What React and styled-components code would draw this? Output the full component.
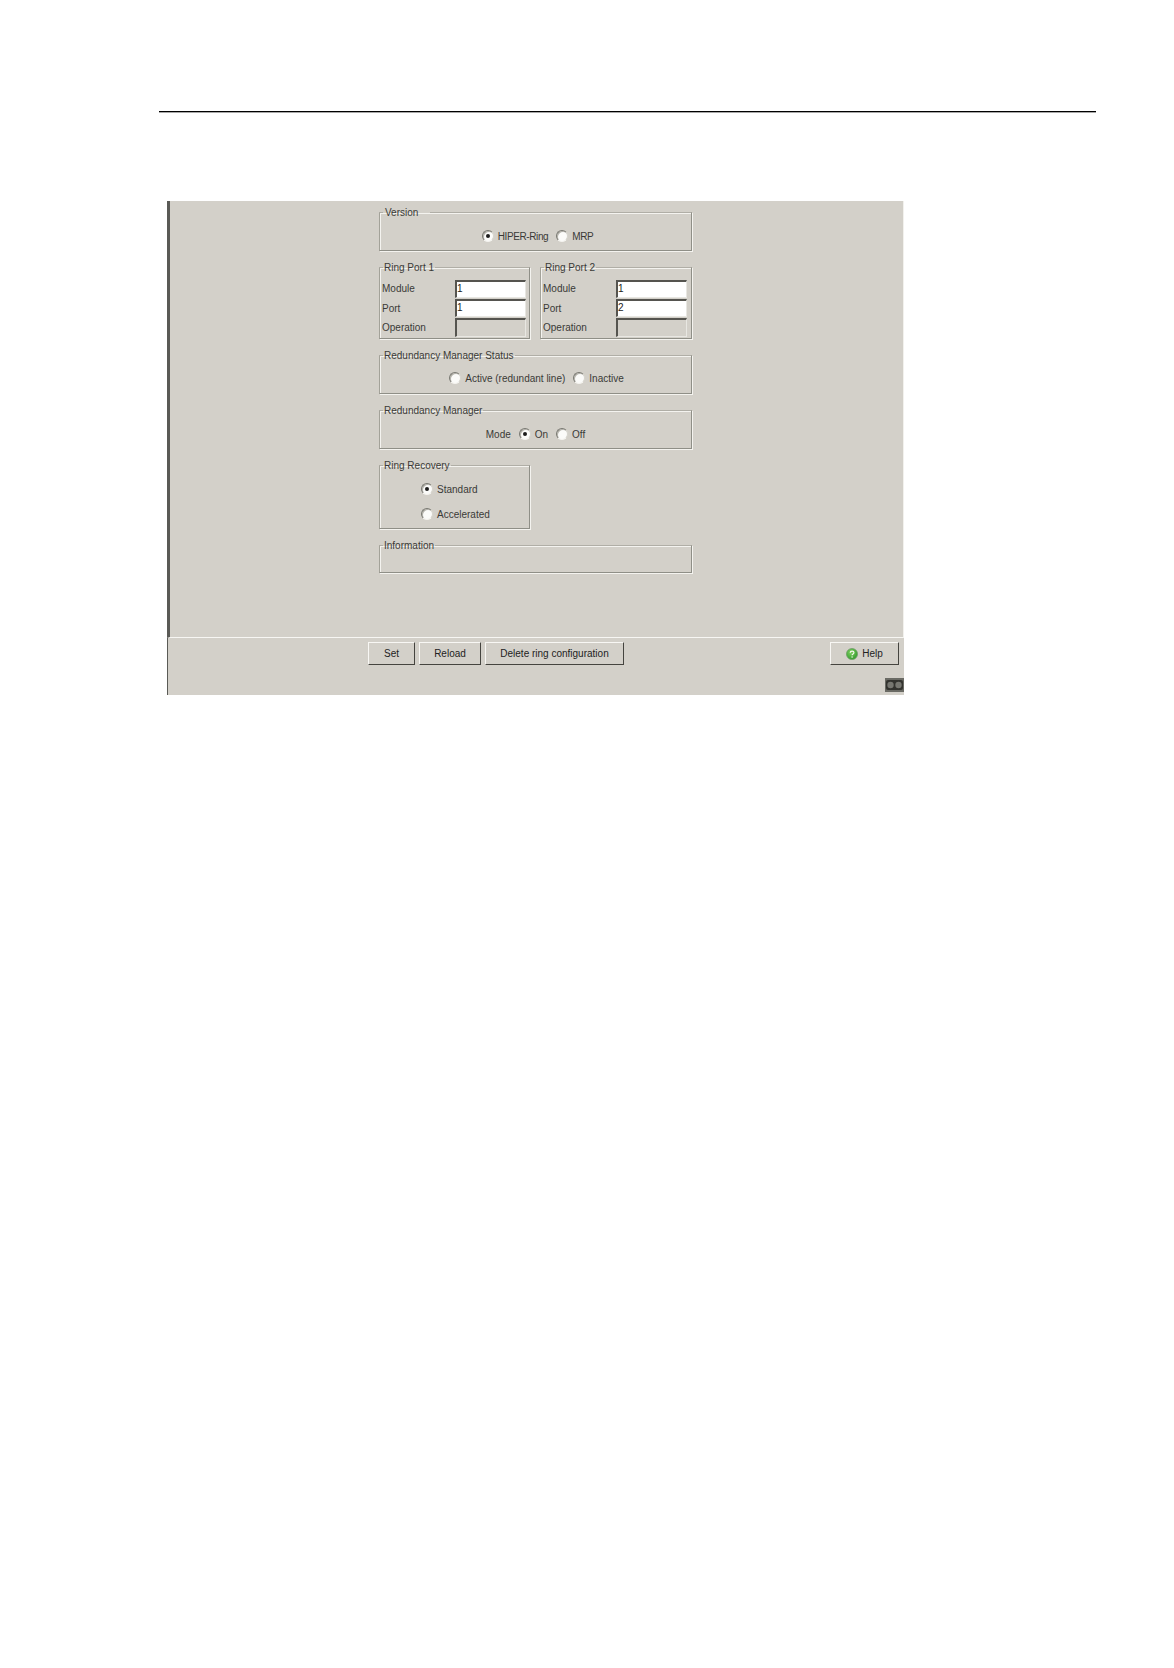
import React from "react";
import styled, { createGlobalStyle } from "styled-components";

const GlobalStyle = createGlobalStyle`
  html, body {
    margin: 0;
    background: #fff;
  }
  body {
    font-family: "Liberation Sans", Arial, sans-serif;
    font-size: 10px;
    color: #3a3a37;
  }
`;

const Page = styled.div`
  width: 1174px;
  height: 1668px;
  padding: 111px 0 0 159px;
  box-sizing: border-box;
`;

const HeaderRule = styled.div`
  width: 937px;
  height: 1px;
  background: #000;
  box-shadow: 0 1px 0 #a8a8a8;
  margin-bottom: 89px;
`;

const Panel = styled.div`
  position: relative;
  width: 737px;
  margin-left: 8px;
  height: 494px;
  background: #d3d0c9;
  display: flex;
  flex-direction: column;
`;

const Main = styled.div`
  height: 437px;
  box-sizing: border-box;
  border-left: 3px solid #5a5a56;
  border-right: 1px solid #f2f1ed;
  border-bottom: 1px solid #f7f6f3;
  padding: 4px 0 0 209px;
`;

const Form = styled.div`
  width: 313px;
  display: flex;
  flex-direction: column;
  gap: 9px;
`;

const Group = styled.fieldset`
  margin: 0;
  padding: 0;
  box-sizing: border-box;
  min-width: 0;
  width: ${(p) => p.$width || 313}px;
  height: ${(p) => p.$height}px;
  border: 1px solid #a3a299;
  border-top-color: #b0aea6;
  border-right-color: #8f8f87;
  border-bottom-color: #8f8f87;
  box-shadow: 1px 1px 0 #f4f3ef, inset 1px 1px 0 #f4f3ef;
`;

const Caption = styled.legend`
  margin-left: 3px;
  padding: 2px ${(p) => p.$right || 1}px 0 ${(p) => p.$left || 1}px;
  line-height: 12px;
  font-size: 10px;
`;

const ChoiceRow = styled.div`
  display: flex;
  align-items: center;
  justify-content: center;
  height: ${(p) => p.$height || 34}px;
  padding-left: ${(p) => p.$indent || 0}px;
  gap: 8px;
`;

const ChoiceColumn = styled.div`
  display: flex;
  flex-direction: column;
  gap: 13px;
  padding: 11px 0 0 41px;
`;

const Choice = styled.label`
  display: flex;
  align-items: center;
  gap: 4px;
  white-space: nowrap;
  letter-spacing: ${(p) => (p.$tight ? "-0.4px" : "normal")};
`;

const ModeLabel = styled.span`
  margin-right: 0;
`;

const RadioDot = styled.span`
  width: 12px;
  height: 12px;
  box-sizing: border-box;
  border-radius: 50%;
  background: #fbfbf9;
  border: 1px solid;
  border-color: #77766f #d6d4cd #f4f3ef #77766f;
  box-shadow: inset 1px 1px 0 #b4b2aa;
  display: flex;
  align-items: center;
  justify-content: center;
  &::after {
    content: "";
    width: 4px;
    height: 4px;
    border-radius: 50%;
    background: ${(p) => (p.$on ? "#1c1c1c" : "transparent")};
  }
`;

const PortRow = styled.div`
  display: flex;
  gap: 10px;
`;

const PortGrid = styled.div`
  display: grid;
  grid-template-columns: 73px 71px;
  grid-auto-rows: 19.5px;
  padding: 5px 0 0 2px;
  align-items: center;
`;

const Field = styled.div`
  height: ${(p) => (p.$disabled ? 19 : 18)}px;
  box-sizing: border-box;
  border: 1px solid;
  border-color: #55544f #e8e7e2 #e8e7e2 #55544f;
  border-left-width: 2px;
  border-top-width: 2px;
  background: ${(p) => (p.$disabled ? "#d3d0c9" : "#fff")};
  color: #222;
  line-height: 14px;
`;

const Toolbar = styled.div`
  flex: 1;
  border-left: 1px solid #5a5a56;
  display: flex;
  gap: 4px;
  padding: 4px 5px 0 200px;
  align-items: flex-start;
`;

const Button = styled.button`
  height: 23px;
  width: ${(p) => p.$width}px;
  margin: 0;
  padding: 0;
  box-sizing: border-box;
  background: #d3d0c9;
  border: 1px solid;
  border-color: #f8f7f4 #45443f #45443f #f8f7f4;
  font: inherit;
  color: #222;
  display: flex;
  align-items: center;
  justify-content: center;
  gap: 4px;
`;

const HelpButton = styled(Button)`
  margin-left: auto;
`;

const Indicator = styled.div`
  position: absolute;
  right: 0;
  bottom: 3px;
  width: 19px;
  height: 14px;
`;

function Radio({ on, tight, children }) {
  return (
    <Choice $tight={tight}>
      <RadioDot $on={on} />
      {children}
    </Choice>
  );
}

function PortGroup({ title, port, width }) {
  return (
    <Group $width={width} $height={79}>
      <Caption>{title}</Caption>
      <PortGrid>
        <span>Module</span>
        <Field>1</Field>
        <span>Port</span>
        <Field>{port}</Field>
        <span>Operation</span>
        <Field $disabled />
      </PortGrid>
    </Group>
  );
}

export default function App() {
  return (
    <>
      <GlobalStyle />
      <Page>
        <HeaderRule />
        <Panel>
          <Main>
            <Form>
              <Group $height={46}>
                <Caption $left={2} $right={12}>Version</Caption>
                <ChoiceRow $indent={4}>
                  <Radio on tight>HIPER-Ring</Radio>
                  <Radio tight>MRP</Radio>
                </ChoiceRow>
              </Group>
              <PortRow>
                <PortGroup title="Ring Port 1" port="1" width={151} />
                <PortGroup title="Ring Port 2" port="2" width={152} />
              </PortRow>
              <Group $height={46}>
                <Caption>Redundancy Manager Status</Caption>
                <ChoiceRow $height={32} $indent={2}>
                  <Radio>Active (redundant line)</Radio>
                  <Radio>Inactive</Radio>
                </ChoiceRow>
              </Group>
              <Group $height={46}>
                <Caption>Redundancy Manager</Caption>
                <ChoiceRow>
                  <ModeLabel>Mode</ModeLabel>
                  <Radio on>On</Radio>
                  <Radio>Off</Radio>
                </ChoiceRow>
              </Group>
              <Group $width={151} $height={71}>
                <Caption>Ring Recovery</Caption>
                <ChoiceColumn>
                  <Radio on>Standard</Radio>
                  <Radio>Accelerated</Radio>
                </ChoiceColumn>
              </Group>
              <Group $height={35}>
                <Caption>Information</Caption>
              </Group>
            </Form>
          </Main>
          <Toolbar>
            <Button $width={47}>Set</Button>
            <Button $width={62}>Reload</Button>
            <Button $width={139}>Delete ring configuration</Button>
            <HelpButton $width={69}>
              <svg width="12" height="12" viewBox="0 0 13 13">
                <defs>
                  <radialGradient id="helpGreen" cx="40%" cy="35%" r="70%">
                    <stop offset="0%" stopColor="#7fd060" />
                    <stop offset="100%" stopColor="#2f9a2c" />
                  </radialGradient>
                </defs>
                <circle cx="6.5" cy="6.5" r="6" fill="url(#helpGreen)" stroke="#6f9a68" strokeWidth="0.8" />
                <path d="M4.6 5.1c0-1.1.9-1.7 2-1.7s2 .6 2 1.6c0 1.5-2 1.4-2 2.9" fill="none" stroke="#f4f8ee" strokeWidth="1.3" />
                <circle cx="6.6" cy="9.8" r="0.8" fill="#f4f8ee" />
              </svg>
              Help
            </HelpButton>
          </Toolbar>
          <Indicator>
            <svg width="19" height="14" viewBox="0 0 19 14">
              <rect width="19" height="14" fill="#6a6a64" />
              <rect x="1" y="2" width="17" height="10" rx="2" fill="#33332f" />
              <circle cx="5.5" cy="7" r="3.2" fill="#777771" />
              <circle cx="13.5" cy="7" r="3.2" fill="#777771" />
            </svg>
          </Indicator>
        </Panel>
      </Page>
    </>
  );
}
